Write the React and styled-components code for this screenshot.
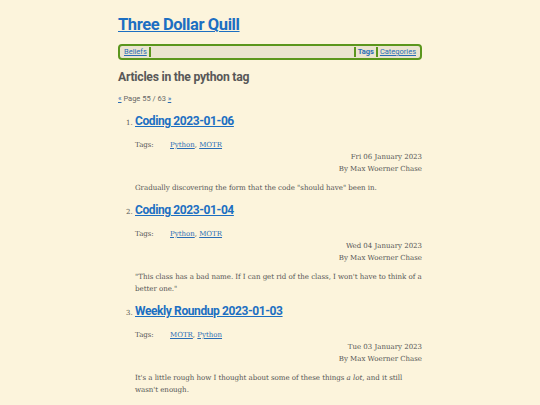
import React from "react";
import styled, { createGlobalStyle } from "styled-components";

const GlobalStyle = createGlobalStyle`
  html, body {
    margin: 0;
    padding: 0;
    background: #fcf4dc;
  }
  body {
    font-family: "DejaVu Serif", serif;
    color: #555;
  }
`;

const Page = styled.div`
  width: 304px;
  margin: 0 auto;
  padding-top: 14px;
`;

const SiteTitle = styled.h1`
  margin: 0;
  font-family: Roboto, sans-serif;
  font-size: 16.5px;
  line-height: 22px;
  font-weight: 700;
  letter-spacing: -0.4px;
  a {
    color: #1c6fc2;
  }
`;

const Nav = styled.nav`
  display: flex;
  align-items: center;
  margin-top: 8px;
  height: 12px;
  border: 2px solid #5b961d;
  border-radius: 4px;
  background: #ebe4cf;
  padding: 0 2px;
  font-family: Roboto, sans-serif;
  font-size: 7.5px;
`;

const NavLink = styled.a`
  color: #2a6db5;
  font-weight: ${(p) => (p.$current ? 700 : 400)};
  text-decoration: ${(p) => (p.$current ? "none" : "underline")};
  padding: 0 2px;
  ${(p) => p.$barRight && "border-right: 2px solid #5b961d;"}
  ${(p) => p.$barLeft && "border-left: 2px solid #5b961d;"}
  line-height: 10px;
`;

const Spacer = styled.div`
  flex: 1;
`;

const Heading = styled.h2`
  margin: 9px 0 0;
  font-family: Roboto, sans-serif;
  font-size: 12.2px;
  line-height: 16px;
  font-weight: 700;
  letter-spacing: -0.25px;
  color: #585858;
`;

const Pager = styled.p`
  margin: 9px 0 0;
  font-family: Roboto, sans-serif;
  font-size: 7.5px;
  color: #666;
  a {
    color: #2a6db5;
  }
`;

const List = styled.ol`
  margin: 10px 0 0;
  padding-left: 17px;
  font-size: 7px;
  color: #555;
`;

const Item = styled.li`
  margin-bottom: 8px;
`;

const ItemTitle = styled.h3`
  margin: 0;
  font-family: Roboto, sans-serif;
  font-size: 12px;
  line-height: 16px;
  font-weight: 700;
  letter-spacing: -0.4px;
  a {
    color: #1c6fc2;
  }
`;

const TagRow = styled.div`
  display: flex;
  margin-top: 11px;
  font-size: 7px;
  line-height: 10px;
`;

const TagLabel = styled.span`
  width: 35px;
`;

const TagLink = styled.a`
  color: #2a6db5;
`;

const Meta = styled.div`
  text-align: right;
  font-size: 7px;
  line-height: 12px;
  margin-top: 1px;
`;

const Summary = styled.p`
  margin: 7px 0 0;
  font-size: 7.1px;
  line-height: 12px;
  letter-spacing: -0.05px;
`;

const articles = [
  {
    title: "Coding 2023-01-06",
    tags: ["Python", "MOTR"],
    date: "Fri 06 January 2023",
    summary: <>Gradually discovering the form that the code "should have" been in.</>,
  },
  {
    title: "Coding 2023-01-04",
    tags: ["Python", "MOTR"],
    date: "Wed 04 January 2023",
    summary: (
      <>
        "This class has a bad name. If I can get rid of the class, I won't have to think of a better one."
      </>
    ),
  },
  {
    title: "Weekly Roundup 2023-01-03",
    tags: ["MOTR", "Python"],
    date: "Tue 03 January 2023",
    summary: (
      <>
        It's a little rough how I thought about some of these things <em>a lot</em>, and it still wasn't enough.
      </>
    ),
  },
];

export default function App() {
  return (
    <>
      <GlobalStyle />
      <Page>
        <SiteTitle>
          <a href="#">Three Dollar Quill</a>
        </SiteTitle>
        <Nav>
          <NavLink href="#" $barRight>Beliefs</NavLink>
          <Spacer />
          <NavLink $current $barLeft>Tags</NavLink>
          <NavLink href="#" $barLeft>Categories</NavLink>
        </Nav>
        <Heading>Articles in the python tag</Heading>
        <Pager>
          <a href="#">«</a> Page 55 / 63 <a href="#">»</a>
        </Pager>
        <List>
          {articles.map((a) => (
            <Item key={a.title}>
              <ItemTitle>
                <a href="#">{a.title}</a>
              </ItemTitle>
              <TagRow>
                <TagLabel>Tags:</TagLabel>
                <span>
                  {a.tags.map((t, i) => (
                    <React.Fragment key={t}>
                      {i > 0 && ", "}
                      <TagLink href="#">{t}</TagLink>
                    </React.Fragment>
                  ))}
                </span>
              </TagRow>
              <Meta>
                {a.date}
                <br />
                By Max Woerner Chase
              </Meta>
              <Summary>{a.summary}</Summary>
            </Item>
          ))}
        </List>
      </Page>
    </>
  );
}
